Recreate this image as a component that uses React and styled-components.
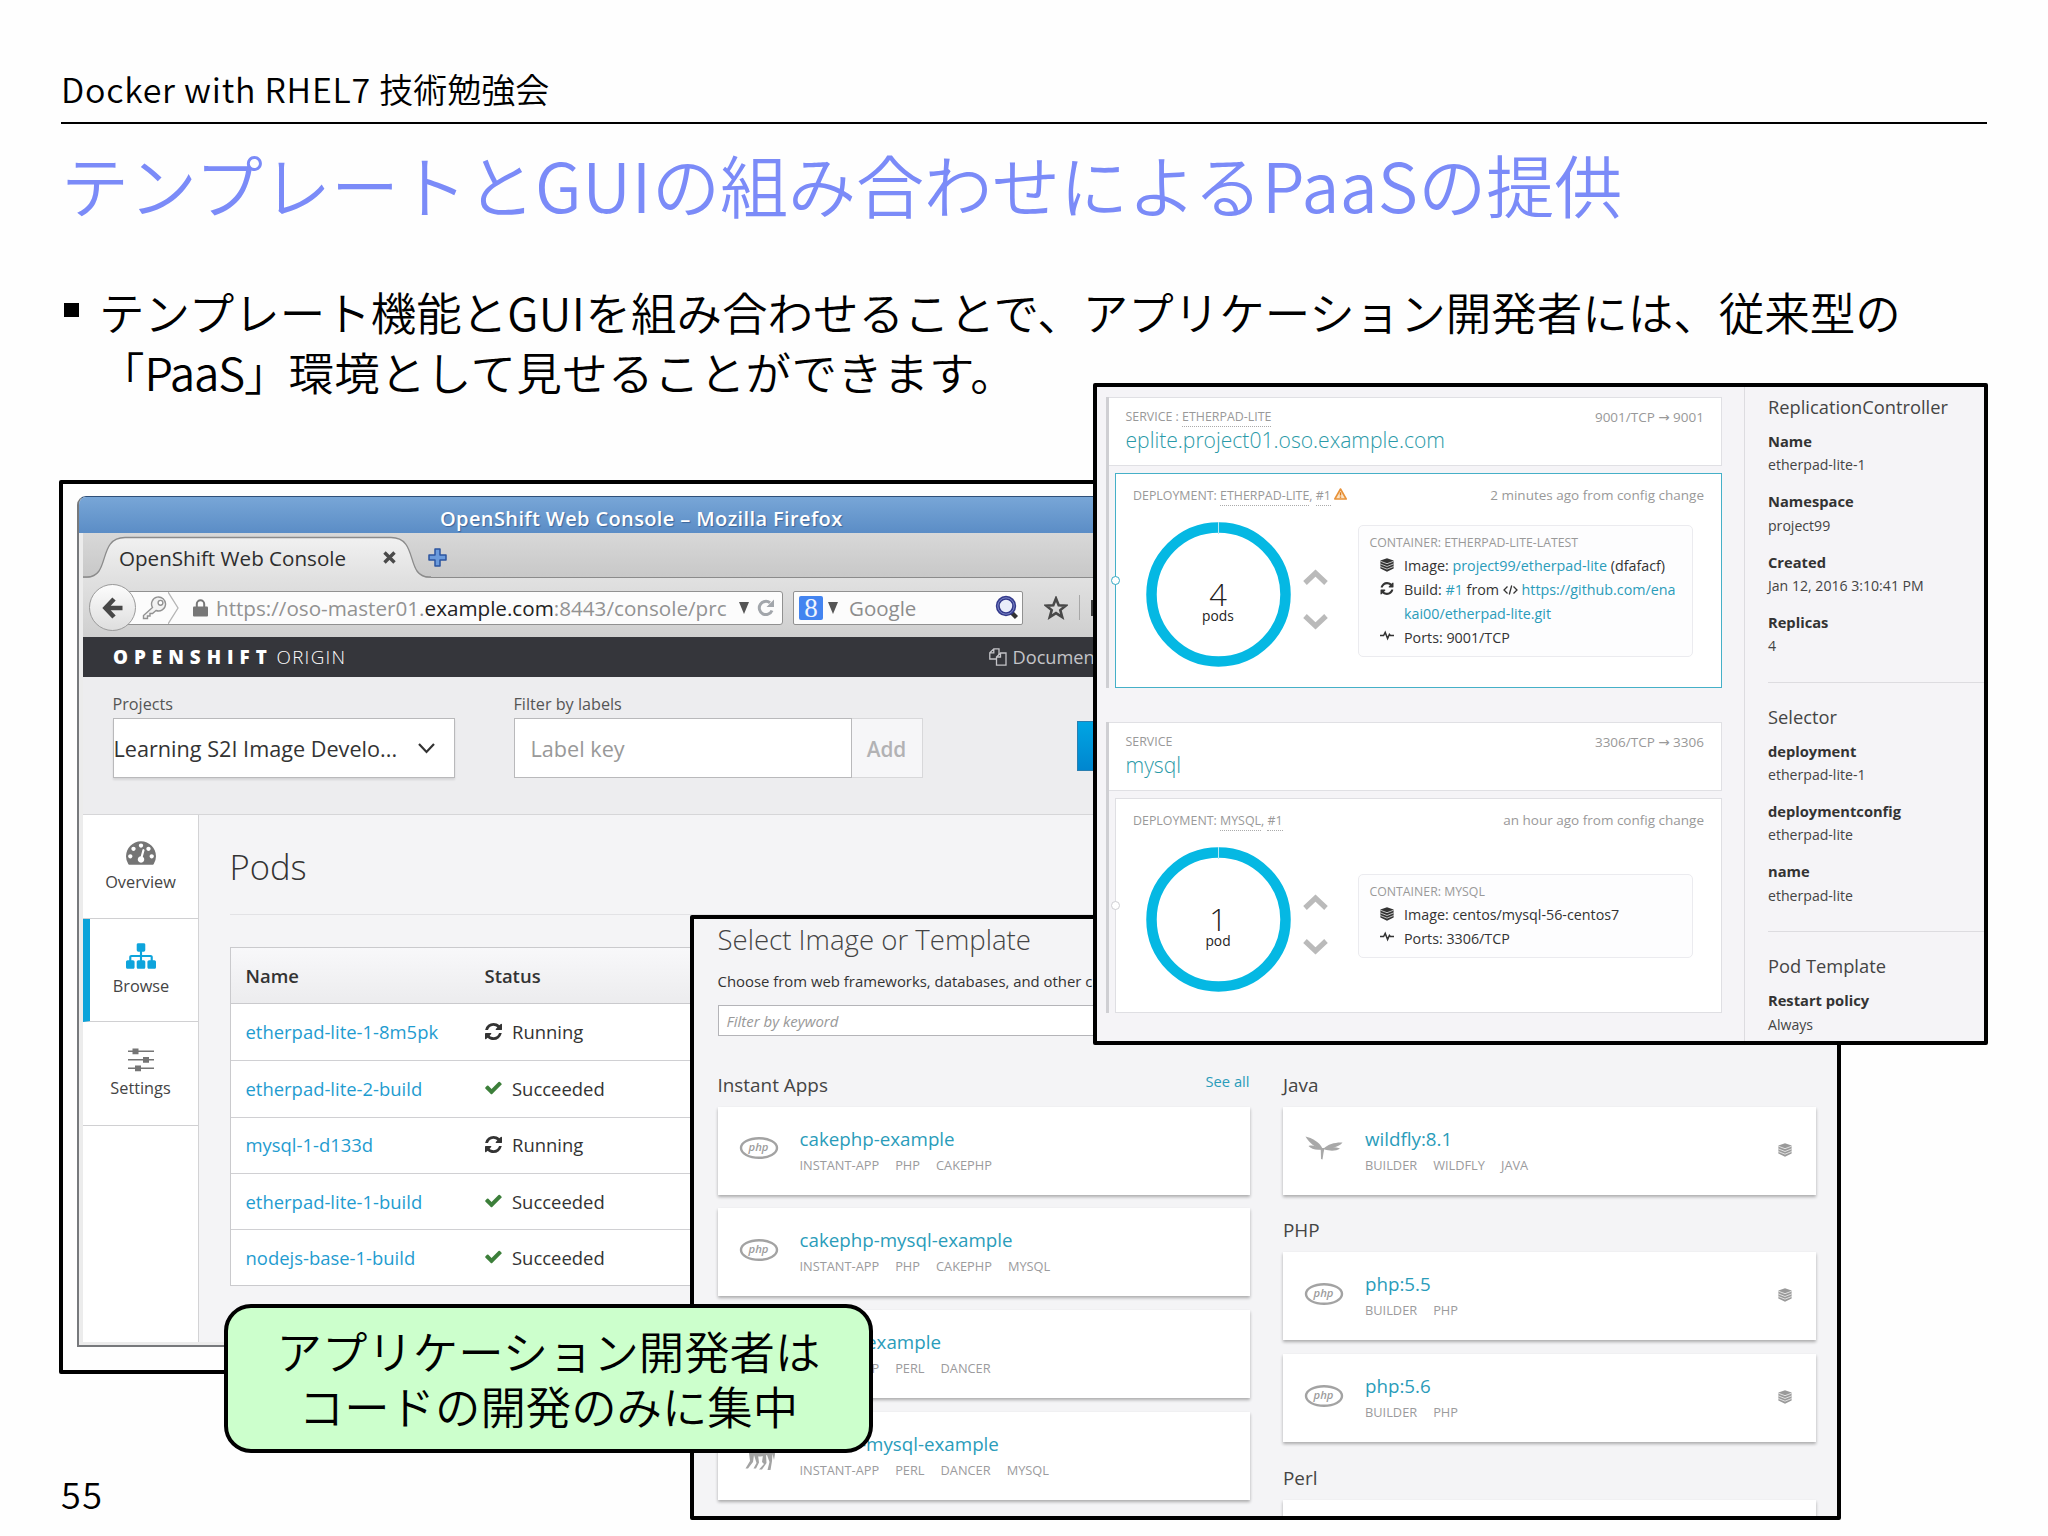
import React from 'react';
import styled, { createGlobalStyle, css } from 'styled-components';

const FA = {
  refresh:
    'M1511 928q0 5-1 7-64 268-268 434.5t-478 166.5q-146 0-282.5-55t-243.5-157l-129 129q-19 19-45 19t-45-19-19-45v-448q0-26 19-45t45-19h448q26 0 45 19t19 45-19 45l-137 137q71 66 161 102t187 36q134 0 250-65t186-179q11-17 53-117 8-23 30-23h192q13 0 22.5 9.5t9.5 22.5zm25-800v448q0 26-19 45t-45 19h-448q-26 0-45-19t-19-45 19-45l138-138q-148-137-349-137-134 0-250 65t-186 179q-11 17-53 117-8 23-30 23h-199q-13 0-22.5-9.5t-9.5-22.5v-7q65-268 270-434.5t480-166.5q146 0 284 55.5t245 156.5l130-129q19-19 45-19t45 19 19 45z',
  check:
    'M1671 566q0 40-28 68l-724 724-136 136q-28 28-68 28t-68-28l-136-136-362-362q-28-28-28-68t28-68l136-136q28-28 68-28t68 28l294 295 656-657q28-28 68-28t68 28l136 136q28 28 28 68z',
  dashboard:
    'M384 1152q0-53-37.5-90.5t-90.5-37.5-90.5 37.5-37.5 90.5 37.5 90.5 90.5 37.5 90.5-37.5 37.5-90.5zm192-448q0-53-37.5-90.5t-90.5-37.5-90.5 37.5-37.5 90.5 37.5 90.5 90.5 37.5 90.5-37.5 37.5-90.5zm428 481l101-382q6-26-7.5-48.5t-38.5-29.5-48 6.5-30 39.5l-101 382q-60 5-107 43.5t-63 98.5q-20 77 20 146t117 89 146-20 89-117q16-60-6-117t-72-91zm660-33q0-53-37.5-90.5t-90.5-37.5-90.5 37.5-37.5 90.5 37.5 90.5 90.5 37.5 90.5-37.5 37.5-90.5zm-640-640q0-53-37.5-90.5t-90.5-37.5-90.5 37.5-37.5 90.5 37.5 90.5 90.5 37.5 90.5-37.5 37.5-90.5zm448 192q0-53-37.5-90.5t-90.5-37.5-90.5 37.5-37.5 90.5 37.5 90.5 90.5 37.5 90.5-37.5 37.5-90.5zm320 448q0 261-141 483-19 29-54 29h-1402q-35 0-54-29-141-221-141-483 0-182 71-348t191-286 286-191 348-71 348 71 286 191 191 286 71 348z',
  sitemap:
    'M1792 1248v320q0 40-28 68t-68 28h-320q-40 0-68-28t-28-68v-320q0-40 28-68t68-28h96v-192h-512v192h96q40 0 68 28t28 68v320q0 40-28 68t-68 28h-320q-40 0-68-28t-28-68v-320q0-40 28-68t68-28h96v-192h-512v192h96q40 0 68 28t28 68v320q0 40-28 68t-68 28h-320q-40 0-68-28t-28-68v-320q0-40 28-68t68-28h96v-192q0-52 38-90t90-38h512v-192h-96q-40 0-68-28t-28-68v-320q0-40 28-68t68-28h320q40 0 68 28t28 68v320q0 40-28 68t-68 28h-96v192h512q52 0 90 38t38 90v192h96q40 0 68 28t28 68z',
};

const RefreshIcon = ({ size = 17, color = '#333' }) => (
  <svg width={size} height={size} viewBox="0 0 1536 1536" fill={color}>
    <path d={FA.refresh} />
  </svg>
);

const CheckIcon = () => (
  <svg width="17" height="16" viewBox="100 300 1600 1260" fill="#3c7f3a">
    <path d={FA.check} />
  </svg>
);

const DashboardIcon = () => (
  <svg width="30" height="30" viewBox="0 0 1792 1792" fill="#757575">
    <path d={FA.dashboard} />
  </svg>
);

const SitemapIcon = () => (
  <svg width="30" height="30" viewBox="0 0 1792 1792" fill="#0ea4dc">
    <path d={FA.sitemap} />
  </svg>
);

const SlidersIcon = () => (
  <svg width="26" height="26" viewBox="0 0 26 26" fill="#757575">
    <path d="M0 3.5h26v1.6H0zM0 12h26v1.6H0zM0 20.5h26v1.6H0z" />
    <path d="M4.5 1.5h6v5.8h-6zM15 10h6v5.8h-6zM7 18.5h6v5.8H7z" />
  </svg>
);

const StackIcon = ({ size = 14, color = '#333' }) => (
  <svg width={size} height={size} viewBox="0 0 14 14">
    <path d="M7 .2L13.6 2.6V10.6L7 13.8L.4 10.6V2.6z" fill={color} />
    <path
      d="M.4 3.2L7 5.7L13.6 3.2M.4 5.9L7 8.5L13.6 5.9M.4 8.5L7 11.2L13.6 8.5"
      fill="none"
      stroke="#fff"
      strokeWidth=".7"
    />
  </svg>
);

const PulseIcon = () => (
  <svg width="14" height="11" viewBox="0 0 14 11" fill="none" stroke="#333" strokeWidth="1.5">
    <path d="M0 5.5H3.6L5.2 2.4L7.6 8.6L9.4 4.4L10.4 5.5H14" />
  </svg>
);

const WarningIcon = () => (
  <svg width="13" height="12" viewBox="0 0 13 12">
    <path d="M6.5 1L12.2 11H.8z" fill="#fbe3c4" stroke="#e8923a" strokeWidth="1.6" strokeLinejoin="round" />
    <path d="M5.8 4.2h1.4v3.4H5.8zM5.8 8.4h1.4v1.3H5.8z" fill="#d9791c" />
  </svg>
);

const PhpIcon = () => (
  <svg width="40" height="24" viewBox="0 0 40 24">
    <ellipse cx="20" cy="12" rx="18" ry="9.8" fill="#fff" stroke="#a3a3a3" strokeWidth="2.4" />
    <text
      x="19.5"
      y="14.6"
      fill="#9c9c9c"
      fontFamily="Open Sans, sans-serif"
      fontSize="11.3"
      fontStyle="italic"
      fontWeight="600"
      textAnchor="middle"
    >
      php
    </text>
  </svg>
);

const WildflyIcon = () => (
  <svg width="38" height="26" viewBox="0 0 38 26" fill="#a8a8a8">
    <path d="M.5 1.5C7 3 14.500 7 17.500 13.500L15.500 14.500C11 12.500 4 8 .5 1.500z" />
    <path d="M3.500 11C7.500 9.500 13 11.500 16.500 14.500C11 15.500 6 14 3.500 11z" />
    <path d="M18.500 13.500C23 9 31 7 37.500 7.500C36 10.500 28 13.500 19 14.500z" />
    <path d="M20 13.500C26 11.500 31 12 35 13.500C31 16.500 24 16 20 14.500z" />
    <path d="M15.500 13L19.500 13L18.500 18L17.500 24.500L16 24L15.800 16z" />
  </svg>
);

const CamelIcon = () => (
  <svg width="36" height="36" viewBox="0 0 36 36" fill="#a3a3a3">
    <path d="M1 7C3 4 6 4 8 7L11 13C13 8 16 4 20 4C24 4 26 9 29 11C32 12 34 15 34 19L33 25L31.500 19L31 26L29.500 35H26.500L28.500 27L26 20C22 22 17 22 13 20L12 27L7 33.500H4.500L9 26L8 18C5 16 4 12 4 10L1 9.500z" />
    <path d="M13 20L15.500 28L12.500 33.500H15L18 27.500L17 20zM22 20L21 27L23 29L18 34.500H21L25.500 28L25 19z" />
  </svg>
);

const FRAME_LINK = '#2a9cba';

const GlobalStyle = createGlobalStyle`
  * {
    box-sizing: border-box;
  }

  body {
    margin: 0;
    background-color: #fefefe;
  }

  svg {
    display: block;
    flex-shrink: 0;
  }
`;

/* ---------- OpenShift console in Firefox ---------- */

const PODS = [
  { name: 'etherpad-lite-1-8m5pk', status: 'Running' },
  { name: 'etherpad-lite-2-build', status: 'Succeeded' },
  { name: 'mysql-1-d133d', status: 'Running' },
  { name: 'etherpad-lite-1-build', status: 'Succeeded' },
  { name: 'nodejs-base-1-build', status: 'Succeeded' },
];

const Browser = () => (
  <BrowserWindow>
    <WindowTitle>OpenShift Web Console – Mozilla Firefox</WindowTitle>
    <BrowserBody>
      <TabStrip>
        <Tab>
          <TabShape width="348" height="45" viewBox="0 0 348 45">
            <defs>
              <linearGradient id="tab" x1="0" y1="0" x2="0" y2="1">
                <stop offset="0" stopColor="#f1f1f1" />
                <stop offset="1" stopColor="#e1e1e1" />
              </linearGradient>
            </defs>
            <path
              d="M0 44.5H4C28 44.5 14 4.5 42 4.5H308C336 4.5 322 44.5 346 44.5H348V45H0z"
              fill="url(#tab)"
            />
            <path
              d="M0 44H4C28 44 14 4.5 42 4.5H308C336 4.5 322 44 346 44H348"
              fill="none"
              stroke="#8b8b8b"
              strokeWidth="1.3"
            />
          </TabShape>
          <TabLabel>OpenShift Web Console</TabLabel>
          <svg width="13" height="13" viewBox="0 0 13 13" stroke="#4a4a4a" strokeWidth="3.4">
            <path d="M1.5 1.5L11.5 11.5M11.5 1.5L1.5 11.5" />
          </svg>
        </Tab>
        <NewTab width="19" height="19" viewBox="0 0 19 19">
          <path
            d="M7 1H12V7H18V12H12V18H7V12H1V7H7z"
            fill="#6b9bdc"
            stroke="#2d56a0"
            strokeWidth="1.5"
            strokeLinejoin="round"
          />
        </NewTab>
      </TabStrip>

      <Toolbar>
        <BackButton>
          <svg width="21" height="22" viewBox="0 0 21 22" fill="none" stroke="#474747" strokeWidth="4.6">
            <path d="M12 2L3.5 11L12 20M4 11H20.5" />
          </svg>
        </BackButton>
        <UrlBar>
          <Identity>
            <svg width="26" height="24" viewBox="0 0 26 24" fill="#f2f2f2" stroke="#929292" strokeWidth="1.4">
              <path d="M10.5 11.5L1.5 19.5V22.5H5.5V20H8V17.5H10.5L14 14.5A7 7 0 1 0 10.5 11.5z" />
              <circle cx="18.5" cy="6.8" r="2.4" fill="#fff" />
            </svg>
            <svg width="11" height="32" viewBox="0 0 11 32" fill="none" stroke="#b5b5b5" strokeWidth="1.3">
              <path d="M0 0L10 16L0 32" />
            </svg>
          </Identity>
          <svg width="15" height="18" viewBox="0 0 15 18">
            <path d="M3.8 8V5A3.7 3.7 0 0 1 11.2 5V8" fill="none" stroke="#777" strokeWidth="2" />
            <rect y="7.5" width="15" height="10" rx="1" fill="#777" />
          </svg>
          <Url>
            https://oso-master01.<b>example.com</b>:8443/console/prc
          </Url>
          <Caret />
          <ReloadMark width="18" height="18" viewBox="0 0 18 18">
            <path d="M15 11.5A6.6 6.6 0 1 1 13 3.8" fill="none" stroke="#a2a6ab" strokeWidth="3" />
            <path d="M17 .5V8H9.5z" fill="#a2a6ab" />
          </ReloadMark>
        </UrlBar>
        <SearchBar>
          <GoogleBadge>8</GoogleBadge>
          <Caret />
          <SearchLabel>Google</SearchLabel>
          <svg width="25" height="25" viewBox="0 0 25 25">
            <path d="M17 17L22.5 22.5" stroke="#333" strokeWidth="4.4" />
            <circle cx="12" cy="11" r="8.2" fill="#e9edfa" stroke="#343a8c" strokeWidth="4" />
            <circle cx="12" cy="11" r="8.2" fill="none" stroke="#7d88c8" strokeWidth="1" />
          </svg>
        </SearchBar>
        <ToolbarTail>
          <svg width="24" height="24" viewBox="0 0 24 24" fill="none" stroke="#484848" strokeWidth="2.6">
            <path d="M12 2.5L14.7 9.2L21.8 9.6L16.3 14.1L18.2 21L12 17.1L5.8 21L7.7 14.1L2.2 9.6L9.3 9.2z" />
          </svg>
          <Separator />
          <ClippedIcon />
        </ToolbarTail>
      </Toolbar>

      <Masthead>
        <Brand>
          <strong>OPENSHIFT</strong>
          <span>ORIGIN</span>
        </Brand>
        <DocLink>
          <svg width="18" height="18" viewBox="0 0 18 18" fill="#35363b" stroke="#c4c4c8" strokeWidth="1.3">
            <path d="M4.8.8H10V11H.8V4.8zM4.8.8V4.8H.8" />
            <path d="M11.5 5H17V17.2H7.5V9zM11.5 5V9H7.5" />
          </svg>
          Documentation
        </DocLink>
      </Masthead>

      <Filters>
        <Field $width={342}>
          <FieldLabel>Projects</FieldLabel>
          <ProjectSelect>
            Learning S2I Image Develo...
            <svg width="17" height="11" viewBox="0 0 17 11" fill="none" stroke="#333" strokeWidth="2.2">
              <path d="M1 1L8.5 9L16 1" />
            </svg>
          </ProjectSelect>
        </Field>
        <Field $width={409}>
          <FieldLabel>Filter by labels</FieldLabel>
          <LabelFilter>
            <LabelInput>Label key</LabelInput>
            <AddButton>Add</AddButton>
          </LabelFilter>
        </Field>
        <PrimaryButton />
      </Filters>

      <Workspace>
        <SideNav>
          <NavItem>
            <DashboardIcon />
            Overview
          </NavItem>
          <NavItem $active>
            <SitemapIcon />
            Browse
          </NavItem>
          <NavItem>
            <SlidersIcon />
            Settings
          </NavItem>
        </SideNav>
        <PodsPage>
          <PodsTitle>Pods</PodsTitle>
          <PodTable>
            <PodHead>
              <span>Name</span>
              <span>Status</span>
            </PodHead>
            {PODS.map((pod) => (
              <PodRow key={pod.name}>
                <PodName>{pod.name}</PodName>
                <PodStatus>
                  {pod.status === 'Running' ? <RefreshIcon /> : <CheckIcon />}
                  {pod.status}
                </PodStatus>
              </PodRow>
            ))}
          </PodTable>
        </PodsPage>
      </Workspace>
    </BrowserBody>
  </BrowserWindow>
);

/* ---------- Template catalog ---------- */

const INSTANT_APPS = [
  { icon: 'php', name: 'cakephp-example', tags: ['INSTANT-APP', 'PHP', 'CAKEPHP'] },
  { icon: 'php', name: 'cakephp-mysql-example', tags: ['INSTANT-APP', 'PHP', 'CAKEPHP', 'MYSQL'] },
  { icon: 'camel', name: 'dancer-example', tags: ['INSTANT-APP', 'PERL', 'DANCER'] },
  { icon: 'camel', name: 'dancer-mysql-example', tags: ['INSTANT-APP', 'PERL', 'DANCER', 'MYSQL'] },
];

const BUILDERS = [
  { title: 'Java', items: [{ icon: 'wildfly', name: 'wildfly:8.1', tags: ['BUILDER', 'WILDFLY', 'JAVA'] }] },
  {
    title: 'PHP',
    items: [
      { icon: 'php', name: 'php:5.5', tags: ['BUILDER', 'PHP'] },
      { icon: 'php', name: 'php:5.6', tags: ['BUILDER', 'PHP'] },
    ],
  },
];

const CARD_ICONS = { php: <PhpIcon />, camel: <CamelIcon />, wildfly: <WildflyIcon /> };

const TemplateCard = ({ item, builder }) => (
  <Card>
    <CardIcon>{CARD_ICONS[item.icon]}</CardIcon>
    <CardText>
      <CardName>{item.name}</CardName>
      <Tags>
        {item.tags.map((tag) => (
          <span key={tag}>{tag}</span>
        ))}
      </Tags>
    </CardText>
    {builder && <StackIcon size={14} color="#9a9a9a" />}
  </Card>
);

const Catalog = () => (
  <CatalogBody>
    <CatalogTitle>Select Image or Template</CatalogTitle>
    <CatalogLead>Choose from web frameworks, databases, and other components</CatalogLead>
    <KeywordInput>Filter by keyword</KeywordInput>
    <CatalogColumns>
      <CardList>
        <SectionHead>
          Instant Apps
          <SeeAll>See all</SeeAll>
        </SectionHead>
        {INSTANT_APPS.map((item) => (
          <TemplateCard key={item.name} item={item} />
        ))}
      </CardList>
      <CardList>
        {BUILDERS.map((group) => (
          <React.Fragment key={group.title}>
            <SectionHead>{group.title}</SectionHead>
            {group.items.map((item) => (
              <TemplateCard key={item.name} item={item} builder />
            ))}
          </React.Fragment>
        ))}
        <SectionHead>Perl</SectionHead>
        <Card />
      </CardList>
    </CatalogColumns>
  </CatalogBody>
);

/* ---------- Project overview ---------- */

const Donut = ({ count, unit }) => (
  <DonutBox>
    <DonutRing width="145" height="145" viewBox="0 0 145 145">
      <circle cx="72.5" cy="72.5" r="67" fill="none" stroke="#05b8e3" strokeWidth="10.5" />
      <path d="M72.5 0V12" stroke="#b5e9f6" strokeWidth="1" />
    </DonutRing>
    <DonutCount>{count}</DonutCount>
    <DonutUnit>{unit}</DonutUnit>
  </DonutBox>
);

const Scaler = () => (
  <ScalerBox>
    <svg width="25" height="16" viewBox="0 0 25 16" fill="none" stroke="#bababa" strokeWidth="5.2">
      <path d="M2 14L12.5 4L23 14" />
    </svg>
    <svg width="25" height="16" viewBox="0 0 25 16" fill="none" stroke="#bababa" strokeWidth="5.2">
      <path d="M2 2L12.5 12L23 2" />
    </svg>
  </ScalerBox>
);

const Overview = () => (
  <OverviewBody>
    <Services>
      <ServiceGroup>
        <ServiceBox>
          <ServiceTop>
            <span>
              SERVICE : <Dotted>ETHERPAD-LITE</Dotted>
            </span>
            <Meta>9001/TCP → 9001</Meta>
          </ServiceTop>
          <ServiceName>eplite.project01.oso.example.com</ServiceName>
        </ServiceBox>
        <DeploymentBox $selected>
          <Node $selected />
          <DeploymentHead>
            <span>
              DEPLOYMENT: <Dotted>ETHERPAD-LITE</Dotted>, <Dotted>#1</Dotted>
            </span>
            <WarningIcon />
            <Meta>2 minutes ago from config change</Meta>
          </DeploymentHead>
          <DeploymentBody>
            <Donut count="4" unit="pods" />
            <Scaler />
            <Container>
              <ContainerTitle>CONTAINER: ETHERPAD-LITE-LATEST</ContainerTitle>
              <ContainerRow>
                <StackIcon />
                <span>
                  Image: <a>project99/etherpad-lite</a> (dfafacf)
                </span>
              </ContainerRow>
              <ContainerRow>
                <RefreshIcon size={13} />
                <span>
                  Build: <a>#1</a> from{' '}
                  <CodeMark width="15" height="10" viewBox="0 0 15 10" fill="none" stroke="#333" strokeWidth="1.3">
                    <path d="M4.5 1.5L1 5L4.5 8.5M10.5 1.5L14 5L10.5 8.5M8.7 .5L6.3 9.5" />
                  </CodeMark>{' '}
                  <a>
                    https://github.com/ena
                    <br />
                    kai00/etherpad-lite.git
                  </a>
                </span>
              </ContainerRow>
              <ContainerRow>
                <PulseIcon />
                <span>Ports: 9001/TCP</span>
              </ContainerRow>
            </Container>
          </DeploymentBody>
        </DeploymentBox>
      </ServiceGroup>

      <ServiceGroup>
        <ServiceBox>
          <ServiceTop>
            <span>SERVICE</span>
            <Meta>3306/TCP → 3306</Meta>
          </ServiceTop>
          <ServiceName>mysql</ServiceName>
        </ServiceBox>
        <DeploymentBox>
          <Node />
          <DeploymentHead>
            <span>
              DEPLOYMENT: <Dotted>MYSQL</Dotted>, <Dotted>#1</Dotted>
            </span>
            <Meta>an hour ago from config change</Meta>
          </DeploymentHead>
          <DeploymentBody>
            <Donut count="1" unit="pod" />
            <Scaler />
            <Container>
              <ContainerTitle>CONTAINER: MYSQL</ContainerTitle>
              <ContainerRow>
                <StackIcon />
                <span>Image: centos/mysql-56-centos7</span>
              </ContainerRow>
              <ContainerRow>
                <PulseIcon />
                <span>Ports: 3306/TCP</span>
              </ContainerRow>
            </Container>
          </DeploymentBody>
        </DeploymentBox>
      </ServiceGroup>
    </Services>

    <Details>
      <DetailGroup>
        <h3>ReplicationController</h3>
        <dl>
          <dt>Name</dt>
          <dd>etherpad-lite-1</dd>
          <dt>Namespace</dt>
          <dd>project99</dd>
          <dt>Created</dt>
          <dd>Jan 12, 2016 3:10:41 PM</dd>
          <dt>Replicas</dt>
          <dd>4</dd>
        </dl>
      </DetailGroup>
      <DetailGroup>
        <h3>Selector</h3>
        <dl>
          <dt>deployment</dt>
          <dd>etherpad-lite-1</dd>
          <dt>deploymentconfig</dt>
          <dd>etherpad-lite</dd>
          <dt>name</dt>
          <dd>etherpad-lite</dd>
        </dl>
      </DetailGroup>
      <DetailGroup>
        <h3>Pod Template</h3>
        <dl>
          <dt>Restart policy</dt>
          <dd>Always</dd>
        </dl>
      </DetailGroup>
    </Details>
  </OverviewBody>
);

const App = () => (
  <>
    <GlobalStyle />
    <Slide>
      <SlideHeader>
        <Tracked $gap={0.75}>Docker with RHEL7 </Tracked>技術勉強会
      </SlideHeader>
      <SlideTitle>
        テンプレートと<Tracked $gap={0.8}>GUI</Tracked>の組み合わせによる<Tracked $gap={0.2}>PaaS</Tracked>の提供
      </SlideTitle>
      <Bullet>
        <BulletMark />
        <p>
          テンプレート機能と<Tracked $gap={0.5}>GUI</Tracked>を組み合わせることで、アプリケーション開発者には、従来型の
          <br />
          「<Tracked $gap={-1.1}>PaaS」</Tracked>
          <Tracked $gap={0.35}>環境として見せることができます。</Tracked>
        </p>
      </Bullet>
      <PageNumber>55</PageNumber>

      <Frame $x={59} $y={480} $w={1240} $h={894}>
        <Browser />
      </Frame>
      <Frame $x={690} $y={915} $w={1151} $h={605}>
        <Catalog />
      </Frame>
      <Frame $x={1093} $y={383} $w={895} $h={662}>
        <Overview />
      </Frame>
      <Callout>
        アプリケーション開発者は
        <br />
        コードの開発のみに集中
      </Callout>
    </Slide>
  </>
);

const Slide = styled.div`
  position: relative;
  display: flex;
  flex-direction: column;
  width: 2048px;
  height: 1536px;
  padding: 55px 61px 15px;
  overflow: hidden;
  color: #000;
  background-color: #fefefe;
  font-family: 'Noto Sans CJK JP', sans-serif;
  font-weight: 350;
`;

const Tracked = styled.span`
  letter-spacing: ${(props) => props.$gap}px;
`;

const SlideHeader = styled.div`
  height: 69px;
  border-bottom: 2px solid #000;
  line-height: 67px;
  font-size: 34px;
`;

const SlideTitle = styled.h1`
  margin: 10px 0 0;
  line-height: 100px;
  font-size: 68px;
  font-weight: 350;
  color: #7b8bf8;
  white-space: nowrap;
`;

const Bullet = styled.div`
  display: flex;
  margin-top: 47px;
  padding-left: 3px;

  p {
    margin: 0;
    line-height: 60px;
    font-size: 45.5px;
    white-space: nowrap;
  }
`;

const BulletMark = styled.div`
  width: 15px;
  height: 14px;
  margin: 22px 20px 0 0;
  background-color: #000;
`;

const PageNumber = styled.div`
  margin-top: auto;
  line-height: 56px;
  font-size: 36px;
  letter-spacing: 1.5px;
`;

const Frame = styled.section`
  position: absolute;
  left: ${(props) => props.$x}px;
  top: ${(props) => props.$y}px;
  width: ${(props) => props.$w}px;
  height: ${(props) => props.$h}px;
  overflow: hidden;
  border: 4px solid #000;
  border-radius: 2px;
  background-color: #fefefe;
  font-family: 'Open Sans', 'DejaVu Sans', sans-serif;
  font-weight: 400;
`;

const Callout = styled.div`
  position: absolute;
  left: 224px;
  top: 1304px;
  width: 649px;
  height: 149px;
  padding-top: 15px;
  border: 4px solid #000;
  border-radius: 27px;
  background-color: #ccffcc;
  line-height: 55px;
  font-size: 45.4px;
  text-align: center;
`;

const BrowserWindow = styled.div`
  width: 1300px;
  height: 851px;
  margin: 12px 0 0 14px;
  overflow: hidden;
  border: 2px solid #77797c;
  border-top: 1px solid #2f4f78;
  border-radius: 9px 9px 0 0;
  background-color: #ececec;
`;

const WindowTitle = styled.div`
  height: 36px;
  padding-left: 361px;
  line-height: 43px;
  font-size: 20px;
  font-weight: 600;
  letter-spacing: 0.38px;
  color: #fff;
  background: linear-gradient(#78a6d7, #5b8dc6);
  text-shadow: 1px 1px 1px #3c659a;
`;

const BrowserBody = styled.div`
  height: 809px;
  margin-left: 4px;
  border-bottom: 1px solid #d5d5d5;
`;

const TabStrip = styled.div`
  display: flex;
  align-items: center;
  height: 45px;
  border-bottom: 1px solid #8b8b8b;
  background: linear-gradient(#d8d8d8, #c8c8c8);
`;

const Tab = styled.div`
  position: relative;
  display: flex;
  align-items: center;
  width: 345px;
  height: 45px;
  padding: 5px 0 0 36px;

  svg {
    position: relative;
  }
`;

const TabShape = styled.svg`
  && {
    position: absolute;
    left: 0;
    top: 0;
  }
`;

const TabLabel = styled.span`
  position: relative;
  width: 264px;
  font-size: 20.6px;
  color: #2e2e2e;
`;

const NewTab = styled.svg`
  margin-top: 4px;
`;

const Toolbar = styled.div`
  display: flex;
  align-items: center;
  height: 59px;
  background: linear-gradient(#e1e1e1, #cfcfcf);
`;

const BackButton = styled.div`
  position: relative;
  z-index: 1;
  display: flex;
  align-items: center;
  justify-content: center;
  width: 47px;
  height: 47px;
  margin-left: 6px;
  border: 1px solid #9a9a9a;
  border-radius: 50%;
  background: linear-gradient(#fcfcfc, #dedede);
`;

const UrlBar = styled.div`
  display: flex;
  align-items: center;
  width: 665px;
  height: 34px;
  margin-left: -18px;
  padding-right: 7px;
  border: 1px solid #919191;
  border-radius: 3px;
  background-color: #fcfcfc;
`;

const Identity = styled.div`
  display: flex;
  align-items: center;
  width: 74px;
  padding-left: 23px;
`;

const Url = styled.span`
  flex: 1;
  margin-left: 8px;
  font-size: 20.65px;
  color: #929292;

  b {
    font-weight: 400;
    color: #222;
  }
`;

const ReloadMark = styled.svg`
  margin-left: 8px;
`;

const Caret = styled.i`
  width: 0;
  height: 0;
  border: 5.5px solid transparent;
  border-top: 12px solid #555;
  border-bottom: 0;
`;

const SearchBar = styled.div`
  display: flex;
  align-items: center;
  width: 230px;
  height: 34px;
  margin-left: 10px;
  padding: 0 3px 0 5px;
  border: 1px solid #919191;
  border-radius: 2px;
  background-color: #fcfcfc;
`;

const GoogleBadge = styled.span`
  width: 24px;
  height: 24px;
  margin-right: 5px;
  border-radius: 2px;
  background-color: #4384f0;
  font-family: 'Liberation Serif', serif;
  font-size: 27px;
  font-weight: 400;
  line-height: 25px;
  text-align: center;
  color: #f0f5fe;
`;

const SearchLabel = styled.span`
  flex: 1;
  margin-left: 11px;
  font-size: 20.5px;
  color: #8d8d8d;
`;

const ToolbarTail = styled.div`
  display: flex;
  align-items: center;
  margin-left: 21px;
`;

const Separator = styled.i`
  width: 1px;
  height: 25px;
  margin: 0 11px;
  background-color: #a8a8a8;
`;

const ClippedIcon = styled.i`
  width: 16px;
  height: 16px;
  background-color: #3a3a3a;
`;

const Masthead = styled.div`
  display: flex;
  align-items: center;
  height: 40px;
  padding-left: 30px;
  background-color: #35363b;
`;

const Brand = styled.div`
  display: flex;
  width: 875.5px;
  font-size: 18.8px;
  color: #fff;

  strong {
    width: 163.5px;
    font-weight: 800;
    letter-spacing: 6px;
  }

  span {
    font-weight: 300;
    letter-spacing: 1.3px;
  }
`;

const DocLink = styled.div`
  display: flex;
  align-items: center;
  gap: 6px;
  margin-top: -1px;
  font-size: 18.2px;
  color: #c4c4c8;
`;

const Filters = styled.div`
  display: flex;
  height: 138px;
  padding: 14px 0 0 29.5px;
  border-bottom: 1px solid #d6d6d8;
  background-color: #ededef;
`;

const Field = styled.div`
  width: ${(props) => props.$width}px;
  margin-right: 59px;
  color: #333;
`;

const FieldLabel = styled.div`
  height: 27px;
  line-height: 26px;
  font-size: 16.2px;
  color: #555;
`;

const inputBox = css`
  display: flex;
  align-items: center;
  height: 60px;
  padding-top: 1px;
  border: 1.5px solid #b9b9bb;
  background-color: #fff;
  font-size: 21.65px;
`;

const ProjectSelect = styled.div`
  ${inputBox}
  justify-content: space-between;
  padding-right: 19px;
  box-shadow: 0 2px 2px rgba(0, 0, 0, 0.1);
  white-space: nowrap;
`;

const LabelFilter = styled.div`
  display: flex;
`;

const LabelInput = styled.div`
  ${inputBox}
  width: 338px;
  padding-left: 16px;
  color: #999;
`;

const AddButton = styled.div`
  ${inputBox}
  justify-content: center;
  width: 71px;
  border-color: #d8d8da;
  border-left: 0;
  background-color: #f6f6f8;
  font-size: 20.8px;
  font-weight: 600;
  color: #b2b2b4;
`;

const PrimaryButton = styled.div`
  width: 170px;
  height: 50px;
  margin: 30px 0 0 95px;
  border: 1px solid #2a7fb0;
  background: linear-gradient(#00a5e3, #0086cf);
`;

const Workspace = styled.div`
  display: flex;
  height: 527px;
`;

const SideNav = styled.div`
  width: 116px;
  border-right: 1px solid #d3d3d5;
  background-color: #fff;
`;

const NavItem = styled.div`
  display: flex;
  flex-direction: column;
  align-items: center;
  justify-content: center;
  gap: 4px;
  height: 103.7px;
  padding-bottom: 2px;
  border-bottom: 1px solid #d0d0d2;
  border-left: ${(props) => (props.$active ? '7px solid #0ba3da' : '0')};
  padding-right: ${(props) => (props.$active ? '6px' : '0')};
  font-size: 16.3px;
  color: #444;
`;

const PodsPage = styled.div`
  flex: 1;
  padding-left: 30.5px;
  background-color: #f4f4f6;
`;

const PodsTitle = styled.h2`
  height: 100px;
  margin: 0 0 32px;
  border-bottom: 1px solid #e2e2e5;
  line-height: 103px;
  font-size: 34.5px;
  font-weight: 300;
  color: #333;
`;

const PodTable = styled.div`
  border: 1.5px solid #cacacd;
  background-color: #fff;
  font-size: 18.45px;
  color: #333;
`;

const PodHead = styled.div`
  display: grid;
  grid-template-columns: 239px 1fr;
  align-items: center;
  height: 56px;
  padding: 0 0 1px 15px;
  border-bottom: 1px solid #cacacd;
  background: linear-gradient(#f8f8fa, #ececee);
  font-weight: 600;
`;

const PodRow = styled.div`
  display: grid;
  grid-template-columns: 239px 1fr;
  align-items: center;
  height: 56.3px;
  padding: 0 0 1px 15px;

  & + & {
    border-top: 1px solid #d0d0d3;
  }
`;

const PodName = styled.span`
  color: #1f9cd0;
`;

const PodStatus = styled.span`
  display: flex;
  align-items: center;
  gap: 10.5px;
`;

const CatalogBody = styled.div`
  height: 100%;
  padding: 0 21px 0 23.5px;
  background-color: #f4f4f6;
  color: #444;
`;

const CatalogTitle = styled.h2`
  height: 42px;
  margin: 0;
  line-height: 41px;
  font-size: 27.6px;
  font-weight: 300;
`;

const CatalogLead = styled.p`
  margin: 0;
  height: 44px;
  line-height: 40px;
  font-size: 14.9px;
  color: #333;
`;

const KeywordInput = styled.div`
  height: 31px;
  padding-left: 8px;
  border: 1px solid #b4b4b8;
  background-color: #fff;
  line-height: 31px;
  font-size: 15px;
  font-style: italic;
  color: #999;
`;

const CatalogColumns = styled.div`
  display: grid;
  grid-template-columns: 532px 533px;
  gap: 33.5px;
  margin-top: 26.5px;
`;

const CardList = styled.div`
  min-width: 0;
`;

const SectionHead = styled.div`
  display: flex;
  justify-content: space-between;
  height: 44px;
  line-height: 45px;
  font-size: 18.9px;
`;

const SeeAll = styled.a`
  line-height: 37px;
  font-size: 14.7px;
  color: ${FRAME_LINK};
`;

const Card = styled.div`
  display: flex;
  align-items: center;
  height: 88px;
  margin-bottom: 13.8px;
  padding-right: 24px;
  background-color: #fff;
  box-shadow: 0 2px 3px rgba(0, 0, 0, 0.3);

  > svg {
    margin-top: -2px;
  }
`;

const CardIcon = styled.div`
  display: flex;
  justify-content: center;
  width: 82px;
  margin-top: -5px;
`;

const CardText = styled.div`
  flex: 1;
  padding-top: 2px;
  line-height: 26px;
`;

const CardName = styled.div`
  font-size: 18.75px;
  color: ${FRAME_LINK};
`;

const Tags = styled.div`
  display: flex;
  gap: 16px;
  font-size: 12.8px;
  color: #9b9b9d;
`;

const OverviewBody = styled.div`
  display: flex;
  height: 100%;
  background-color: #f5f4f7;
`;

const Services = styled.div`
  display: flex;
  flex-direction: column;
  gap: 34px;
  width: 648px;
  padding: 10px 22px 0 9px;
  border-right: 1px solid #dddce0;
`;

const ServiceGroup = styled.div`
  display: flex;
  flex-direction: column;
  gap: 7px;
  height: 291px;
  border-left: 3px solid #cfcfd3;
`;

const ServiceBox = styled.div`
  height: 69px;
  padding: 6px 17px 0 16.5px;
  border: 1px solid #e0e0e4;
  border-left: 0;
  background-color: #fff;
`;

const ServiceTop = styled.div`
  display: flex;
  justify-content: space-between;
  height: 25px;
  line-height: 26px;
  font-size: 12.4px;
  color: #999;
`;

const Dotted = styled.span`
  padding-bottom: 1px;
  border-bottom: 1px dotted #aaa;
`;

const Meta = styled.span`
  margin-left: auto;
  font-size: 13.5px;
  color: #999;
`;

const ServiceName = styled.div`
  line-height: 22px;
  font-size: 21.1px;
  font-weight: 300;
  color: #2a9aa8;
`;

const DeploymentBox = styled.div`
  position: relative;
  height: 215px;
  margin-left: 6px;
  border: ${(props) => (props.$selected ? '1.5px solid #45b0c8' : '1px solid #dfdfe3')};
  background-color: #fff;
`;

const Node = styled.i`
  position: absolute;
  left: -5px;
  top: 102px;
  width: 9px;
  height: 9px;
  border: 1.5px solid ${(props) => (props.$selected ? '#35a9c4' : '#cfcfd3')};
  border-radius: 50%;
  background-color: #fff;
`;

const DeploymentHead = styled.div`
  display: flex;
  align-items: center;
  height: 47.5px;
  padding: 0 17px 5px 17px;
  font-size: 12.4px;
  color: #999;

  svg {
    margin: -3px 0 0 3px;
  }
`;

const DeploymentBody = styled.div`
  display: flex;
  align-items: center;
  height: 138px;
  padding-left: 29.5px;
`;

const DonutBox = styled.div`
  position: relative;
  align-self: flex-start;
  width: 145px;
  height: 145px;
  padding-top: 55px;
  text-align: center;
  color: #222;
`;

const DonutRing = styled.svg`
  position: absolute;
  left: 0;
  top: 0;
`;

const DonutCount = styled.div`
  line-height: 34px;
  font-size: 31px;
  font-weight: 300;
`;

const DonutUnit = styled.div`
  line-height: 10px;
  font-size: 13.8px;
`;

const ScalerBox = styled.div`
  display: flex;
  flex-direction: column;
  gap: 29px;
  margin: 18px 30px 0 12px;
`;

const Container = styled.div`
  width: 335px;
  padding: 6px 0 6px 11px;
  border: 1.5px solid #ebebef;
  border-radius: 5px;
  background-color: #fdfdfe;
  font-size: 14.3px;
  line-height: 24px;
  color: #333;

  a {
    color: ${FRAME_LINK};
  }
`;

const ContainerTitle = styled.div`
  line-height: 22px;
  font-size: 12.3px;
  color: #999;
`;

const ContainerRow = styled.div`
  display: flex;
  padding-left: 10.5px;

  > svg {
    width: 14px;
    margin: 4px 10px 0 0;
  }
`;

const CodeMark = styled.svg`
  display: inline-block;
`;

const Details = styled.aside`
  flex: 1;
  padding-left: 23px;
  color: #444;
`;

const DetailGroup = styled.div`
  & + & {
    margin-top: 24px;
    padding-top: 14px;
    border-top: 1px solid #dddce0;
  }

  h3 {
    height: 41px;
    margin: 0;
    line-height: 39px;
    font-size: 18.3px;
    font-weight: 400;
  }

  dl {
    margin: 0;
    line-height: 23.4px;
    font-size: 14.1px;
  }

  dt {
    padding-top: 2px;
    font-size: 14.7px;
    font-weight: 700;
    color: #333;
  }

  dd {
    margin: 0 0 11.5px;
  }
`;

export default App;
